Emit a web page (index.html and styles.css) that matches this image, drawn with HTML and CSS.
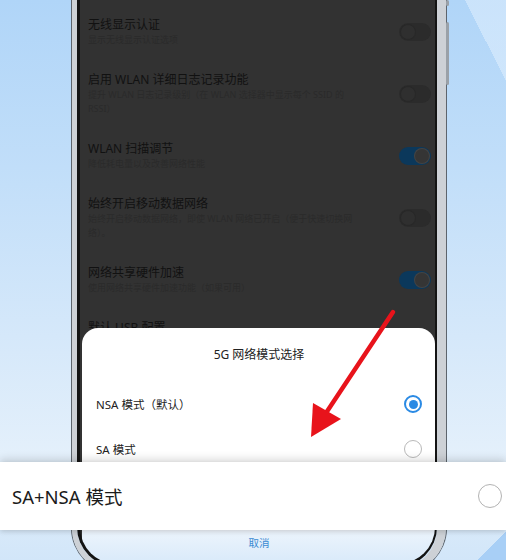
FILE: index.html
```html
<!DOCTYPE html>
<html lang="zh-CN">
<head>
<meta charset="utf-8">
<title>5G 网络模式选择</title>
<link rel="stylesheet" href="styles.css">
</head>
<body>
<div class="scene">
  <div class="phone">
    <span class="side-btn top"></span>
    <span class="side-btn vol"></span>
    <div class="screen">
      <div class="list">
        <div class="row">
          <div class="texts">
            <div class="title">无线显示认证</div>
            <div class="sub">显示无线显示认证选项</div>
          </div>
          <span class="toggle"><span class="knob"></span></span>
        </div>
        <div class="row">
          <div class="texts">
            <div class="title">启用 WLAN 详细日志记录功能</div>
            <div class="sub">提升 WLAN 日志记录级别（在 WLAN 选择器中显示每个 SSID 的<br>RSSI）</div>
          </div>
          <span class="toggle"><span class="knob"></span></span>
        </div>
        <div class="row">
          <div class="texts">
            <div class="title">WLAN 扫描调节</div>
            <div class="sub">降低耗电量以及改善网络性能</div>
          </div>
          <span class="toggle on"><span class="knob"></span></span>
        </div>
        <div class="row">
          <div class="texts">
            <div class="title">始终开启移动数据网络</div>
            <div class="sub">始终开启移动数据网络，即使 WLAN 网络已开启（便于快速切换网<br>络）。</div>
          </div>
          <span class="toggle"><span class="knob"></span></span>
        </div>
        <div class="row">
          <div class="texts">
            <div class="title">网络共享硬件加速</div>
            <div class="sub">使用网络共享硬件加速功能（如果可用）</div>
          </div>
          <span class="toggle on"><span class="knob"></span></span>
        </div>
        <div class="row">
          <div class="texts">
            <div class="title">默认 USB 配置</div>
          </div>
        </div>
      </div>
      <div class="dialog">
        <div class="dlg-title">5G 网络模式选择</div>
        <div class="opt"><span>NSA 模式（默认）</span><span class="radio on"></span></div>
        <div class="opt"><span>SA 模式</span><span class="radio"></span></div>
        <div class="opt covered"><span>SA+NSA 模式</span><span class="radio"></span></div>
        <div class="cancel">取消</div>
      </div>
    </div>
  </div>

  <div class="zoom-bar">
    <span class="zoom-label">SA+NSA 模式</span>
    <span class="radio big"></span>
  </div>

  <svg class="arrow" width="506" height="560" viewBox="0 0 506 560" aria-hidden="true">
    <line x1="393" y1="312" x2="324" y2="416" stroke="#e8131b" stroke-width="4.5" stroke-linecap="round"/>
    <polygon points="311,437 313,403 341,419" fill="#e8131b"/>
  </svg>
</div>
</body>
</html>
```

FILE: styles.css
```css
html, body {
  margin: 0;
  height: 560px;
  overflow: hidden;
}

body {
  font-family: "Noto Sans", "Noto Sans CJK SC", sans-serif;
  background:
    linear-gradient(135deg, transparent 97.3%, #a8cff6 97.3%),
    linear-gradient(63deg, transparent 94.8%, rgba(235, 245, 255, 0.45) 94.8%),
    linear-gradient(180deg, #b0d5f8 0%, #c1def9 30%, #d5e8fa 60%, #e4f0fb 82%, #d2e6f9 100%);
}

.scene {
  position: relative;
  width: 506px;
  height: 560px;
}

/* phone body */
.phone {
  position: relative;
  margin-left: 72px;
  width: 374px;
  height: 573px;
  box-sizing: border-box;
  border-style: solid;
  border-color: #cdd1d6;
  border-width: 0 9px 6px 5px;
  border-radius: 0 0 45px 45px;
  box-shadow: 0 0 0 1px #5d646c;
  display: flex;
}

.side-btn {
  position: absolute;
  right: -12px;
  width: 3px;
  background: #9aa1a8;
  border-radius: 2px;
}
.side-btn.top { top: 0; height: 6px; }
.side-btn.vol { top: 22px; height: 63px; }

.screen {
  flex: 1;
  display: flex;
  flex-direction: column;
  background: #323232;
  border-style: solid;
  border-color: #141414;
  border-width: 0 2px 3px 3px;
  border-radius: 0 0 40px 40px;
  overflow: hidden;
}

/* dimmed settings list */
.list {
  flex-shrink: 0;
  height: 328px;
  box-sizing: border-box;
  padding-top: 5px;
  overflow: hidden;
}

.row {
  display: flex;
  align-items: center;
  padding: 12px 4px 13px 8px;
}

.texts { flex: 1; }

.title {
  font-size: 12px;
  line-height: 16px;
  color: #111111;
}

.sub {
  font-size: 9px;
  line-height: 14px;
  color: #2a2a2a;
}

.toggle {
  display: flex;
  align-items: center;
  width: 32px;
  height: 18px;
  padding: 0 2px;
  box-sizing: border-box;
  border-radius: 9px;
  background: #2b2b2b;
}
.toggle .knob {
  width: 14px;
  height: 14px;
  border-radius: 50%;
  background: #2f2f2f;
  box-shadow: 0 0 0 1px #282828;
}
.toggle.on {
  justify-content: flex-end;
  background: #0b385b;
}
.toggle.on .knob {
  background: #353535;
  box-shadow: 0 0 0 1px #444444;
}

/* bottom dialog */
.dialog {
  flex: 1;
  margin-left: 2px;
  padding: 0 13px 0 14px;
  border-radius: 16px 16px 0 0;
  background: linear-gradient(180deg, #ffffff 0, #ffffff 192px, #eaf3fc 206px, #d6e8f9 240px);
}

.dlg-title {
  padding-top: 19px;
  font-size: 12px;
  line-height: 16px;
  text-align: center;
  color: #222;
}

.opt {
  display: flex;
  align-items: center;
  justify-content: space-between;
  height: 45px;
  font-size: 11.5px;
  color: #222;
}
.dlg-title + .opt { margin-top: 18.5px; }
.opt.covered { visibility: hidden; }

.radio {
  width: 18px;
  height: 18px;
  box-sizing: border-box;
  border-radius: 50%;
  border: 1.3px solid #b9b9b9;
  display: flex;
  align-items: center;
  justify-content: center;
}
.radio.on {
  border: 2px solid #2a8ae4;
}
.radio.on::after {
  content: "";
  width: 9px;
  height: 9px;
  border-radius: 50%;
  background: #2a8ae4;
}

.cancel {
  padding-top: 18px;
  font-size: 10.5px;
  line-height: 16px;
  text-align: center;
  color: #3a8bd2;
}

/* magnified option bar laid over the photo */
.zoom-bar {
  position: absolute;
  left: 0;
  top: 462px;
  width: 506px;
  height: 68px;
  box-sizing: border-box;
  padding: 0 4px 0 12px;
  display: flex;
  align-items: center;
  justify-content: space-between;
  background: #ffffff;
  box-shadow: 0 -3px 8px rgba(0, 0, 0, 0.14), 0 2px 5px rgba(0, 0, 0, 0.12);
}

.zoom-label {
  font-size: 18.5px;
  color: #1b1b1b;
}

.radio.big {
  width: 24px;
  height: 24px;
  border: 1.6px solid #b3b3b3;
}

.arrow {
  position: absolute;
  left: 0;
  top: 0;
  pointer-events: none;
}
```
